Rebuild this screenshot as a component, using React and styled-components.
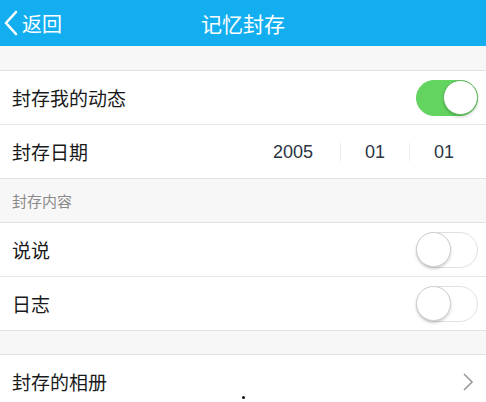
import React from 'react';
import styled, { createGlobalStyle } from 'styled-components';

const GlobalStyle = createGlobalStyle`
  body {
    margin: 0;
    background: #f7f7f7;
    font-family: "Noto Sans CJK SC", "Liberation Sans", sans-serif;
  }
`;

const Page = styled.div`
  width: 486px;
  height: 402px;
  overflow: hidden;
  position: relative;
  background: #f7f7f7;
`;

const Header = styled.div`
  height: 46px;
  background: #13aef0;
  display: grid;
  grid-template-columns: 1fr auto 1fr;
  align-items: center;
  color: #fff;
`;

const Back = styled.div`
  display: flex;
  align-items: center;
  gap: 4px;
  padding-left: 4px;
  font-size: 20px;
`;

const Title = styled.div`
  font-size: 21px;
`;

const Gap = styled.div`
  height: ${p => p.h}px;
  border-bottom: 1px solid #e2e2e2;
`;

const SectionLabel = styled.div`
  height: 43px;
  padding-left: 12px;
  display: flex;
  align-items: center;
  font-size: 15px;
  color: #8a8a8a;
  border-bottom: 1px solid #e2e2e2;
`;

const Row = styled.div`
  height: 53px;
  background: #fff;
  display: flex;
  align-items: center;
  justify-content: space-between;
  padding: 0 8px 0 12px;
  border-bottom: 1px solid ${p => (p.last ? '#e2e2e2' : '#e6e6e6')};
`;

const Label = styled.div`
  font-size: 19px;
  color: #1a1a1a;
`;

const Switch = styled.div`
  width: 62px;
  height: 36px;
  border-radius: 18px;
  box-sizing: border-box;
  background: ${p => (p.on ? '#63d45f' : '#fff')};
  border: 1.5px solid ${p => (p.on ? '#63d45f' : '#e0e0e0')};
  display: flex;
  justify-content: ${p => (p.on ? 'flex-end' : 'flex-start')};
  align-items: center;
`;

const Knob = styled.div`
  width: 35px;
  height: 35px;
  border-radius: 50%;
  background: #fff;
  box-sizing: border-box;
  border: 1px solid ${p => (p.on ? '#5cb85a' : '#cfcfcf')};
  box-shadow: 0 2px 3px rgba(0, 0, 0, 0.18);
  margin: -1px;
`;

const DateBox = styled.div`
  display: flex;
  align-items: center;
`;

const DatePart = styled.div`
  width: 69px;
  box-sizing: border-box;
  padding-right: ${p => (p.first ? 25 : 0)}px;
  text-align: center;
  font-size: 18px;
  color: #2a3444;
  font-family: "Liberation Sans", sans-serif;
  border-left: ${p => (p.first ? 'none' : '1px solid #ececec')};
  line-height: 18px;
`;

const Dot = styled.div`
  position: absolute;
  left: 242px;
  top: 396px;
  width: 3px;
  height: 3px;
  border-radius: 50%;
  background: #111;
`;

const Toggle = ({ on }) => (
  <Switch on={on}>
    <Knob on={on} />
  </Switch>
);

export default function App() {
  return (
    <Page>
      <GlobalStyle />
      <Header>
        <Back>
          <svg width="14" height="26" viewBox="0 0 14 26">
            <path d="M12 2 L2 13 L12 24" fill="none" stroke="#fff" strokeWidth="2.6" strokeLinecap="round" strokeLinejoin="round" />
          </svg>
          返回
        </Back>
        <Title>记忆封存</Title>
        <div />
      </Header>
      <Gap h={24} />
      <Row>
        <Label>封存我的动态</Label>
        <Toggle on />
      </Row>
      <Row last>
        <Label>封存日期</Label>
        <DateBox>
          <DatePart first>2005</DatePart>
          <DatePart>01</DatePart>
          <DatePart>01</DatePart>
        </DateBox>
      </Row>
      <SectionLabel>封存内容</SectionLabel>
      <Row>
        <Label>说说</Label>
        <Toggle />
      </Row>
      <Row last>
        <Label>日志</Label>
        <Toggle />
      </Row>
      <Gap h={23} />
      <Row>
        <Label>封存的相册</Label>
        <svg width="12" height="20" viewBox="0 0 12 20" style={{ marginRight: 4 }}>
          <path d="M2 2 L10 10 L2 18" fill="none" stroke="#9a9a9a" strokeWidth="1.6" />
        </svg>
      </Row>
      <Dot />
    </Page>
  );
}
